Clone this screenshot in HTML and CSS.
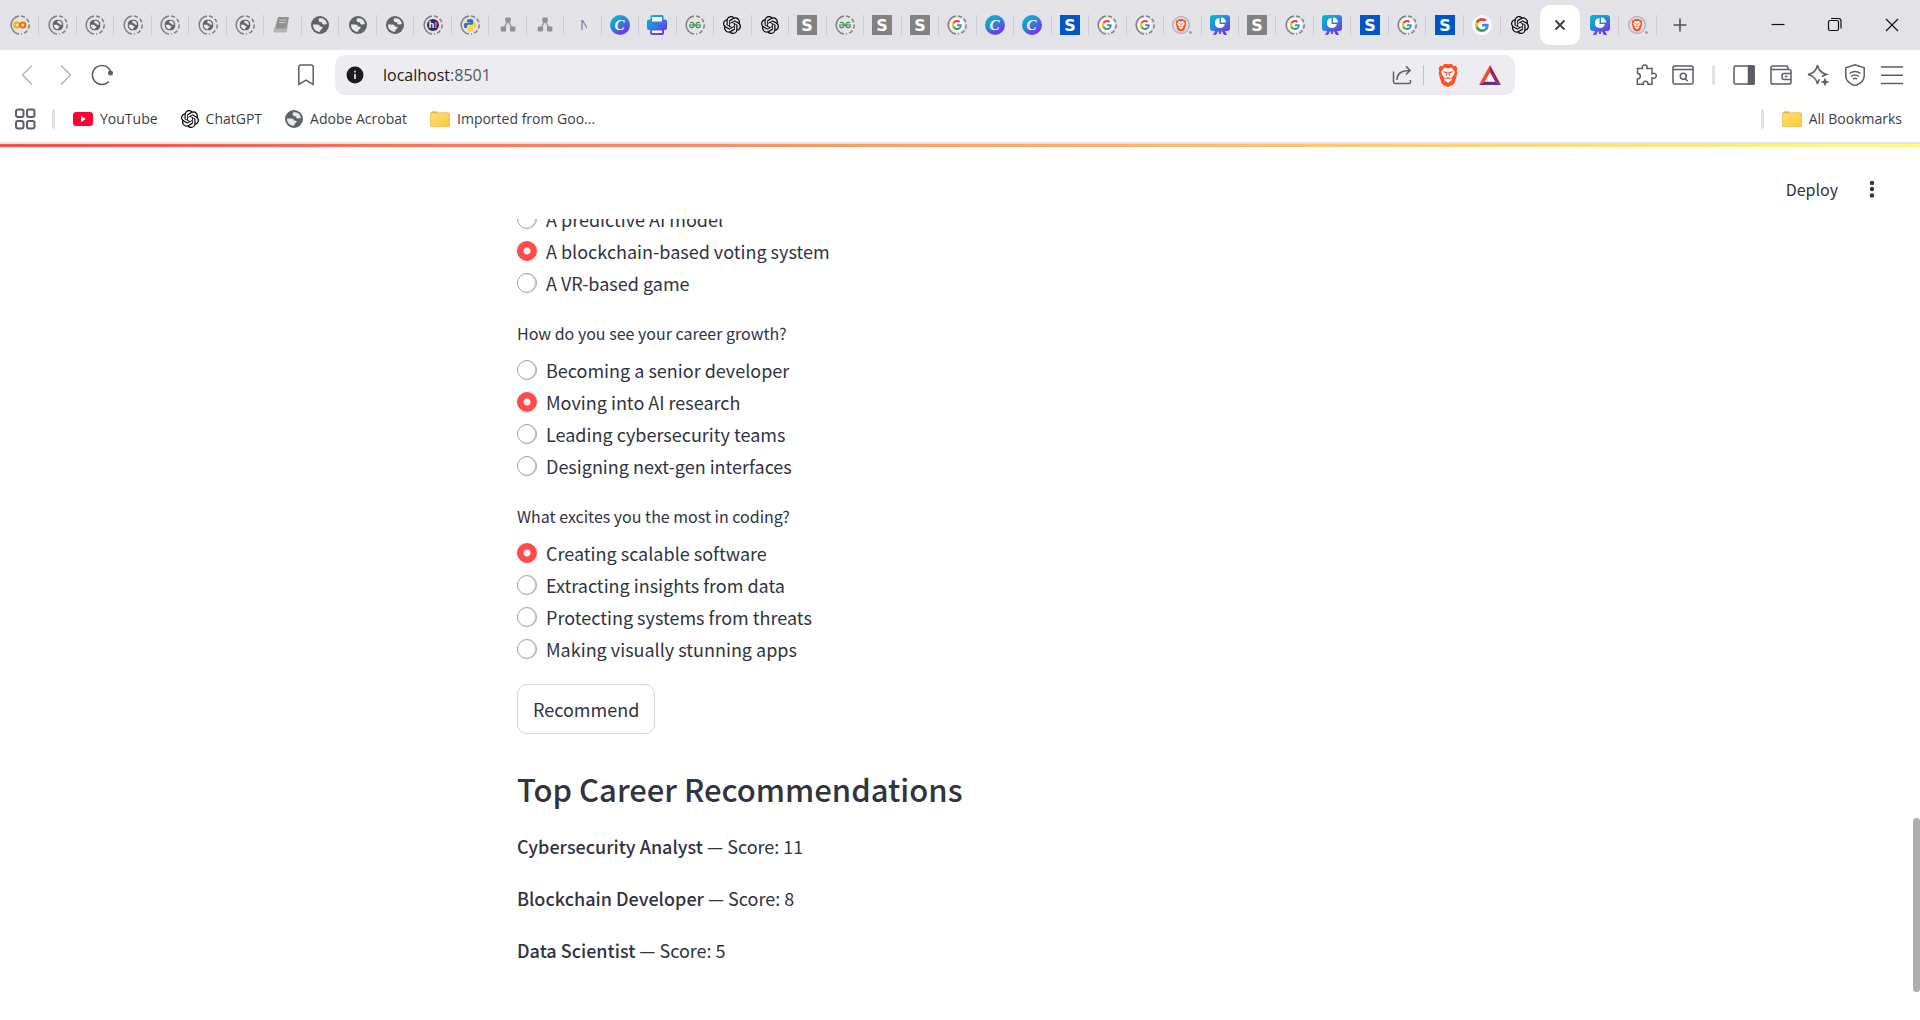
FILE: index.html
```html
<!DOCTYPE html>
<html lang="en">
<head>
<meta charset="utf-8">
<title>localhost:8501</title>
<link rel="stylesheet" href="styles.css">
</head>
<body>
<svg class="gradients" aria-hidden="true">
  <defs>
    <linearGradient id="canva" x1="0" y1="0" x2="0.7" y2="1"><stop offset="0" stop-color="#00c4cc"/><stop offset="0.5" stop-color="#2a86dd"/><stop offset="1" stop-color="#7d2ae8"/></linearGradient>
    <linearGradient id="gold" x1="0" y1="0" x2="1" y2="1"><stop offset="0" stop-color="#ffe07a"/><stop offset="1" stop-color="#fcc838"/></linearGradient>
  </defs>
</svg>
<svg class="sprite" aria-hidden="true">
  <symbol id="ring" viewBox="0 0 20 20"><g fill="none" stroke="#808184" stroke-width="1.5"><path d="M9 .9A9.2 9.2 0 0 0 9 19.1"/><path d="M11 .9a9.2 9.2 0 0 1 8.200 9.100a9.200 9.200 0 0 1-8.200 9.100" stroke-dasharray="4.200 2.200"/></g></symbol>
  <symbol id="globe" viewBox="0 0 18 18"><circle cx="9" cy="9" r="9" fill="#5f6368"/><path d="M2 8.500h4.200c1.900 0 2.600.8 2.700 2.100l2 .2c.8.100.9 1.100.3 1.700l-1.500 1.300c-.3.600-.3 1.400-.9 2C5 15.800 1.800 12.800 2 8.500z" fill="#e9e9ed"/><path d="M8.500 2.300c1.800-.4 3.600 0 5 1.200 1.300 1.100 2.200 2.600 2.400 4.500-1.300.5-3 .5-4 .2-.8-.3-1-1.300-.5-2H9.200c-1.500-.2-2.200-3.300-.7-3.900z" fill="#e9e9ed"/></symbol>
  <symbol id="page" viewBox="0 0 20 20"><use href="#ring" width="20" height="20"/><use href="#globe" x="4.500" y="4.500" width="11" height="11"/></symbol>
  <symbol id="colab" viewBox="0 0 20 20"><use href="#ring" width="20" height="20"/><g fill="none" stroke-width="2"><circle cx="7" cy="10" r="2.600" stroke="#f9ab00"/><circle cx="12.800" cy="10" r="2.600" stroke="#e8710a"/></g></symbol>
  <symbol id="book" viewBox="0 0 20 20"><path d="M5 2h11l-2.500 13H2c-1.500 0-1-2 .2-2.200z" fill="#909090"/><path d="M2 13.500h11.300L15.500 5 14 16.500l-.8 1H2c-2 0-2-3.500 0-4z" fill="#b3b3b3"/><path d="M6.500 5h7M6 7.500h6.500" stroke="#c8c8c8"/></symbol>
  <symbol id="hbang" viewBox="0 0 20 20"><use href="#ring" width="20" height="20"/><circle cx="10" cy="10" r="6" fill="#302b5b"/><text x="10" y="13.200" text-anchor="middle" font-family="Liberation Sans" font-weight="700" font-size="9" fill="#fff">h<tspan fill="#f48fd0">!</tspan></text></symbol>
  <symbol id="python" viewBox="0 0 20 20"><use href="#ring" width="20" height="20"/><path d="M10 4c-2.500 0-3 .8-3 2v1.500h3.300V8H5.500C4 8 3.800 9.500 3.800 10.500S4.300 13 5.500 13H7v-1.700c0-1 .8-1.600 1.800-1.600h3c1 0 1.500-.6 1.500-1.500V6c0-1.300-1-2-3.300-2z" fill="#3775a9"/><path d="M10.200 16.500c2.500 0 3-.8 3-2V13H10v-.5h4.800c1.500 0 1.700-1.500 1.700-2.500S16 7.500 14.800 7.500h-.9v1.700c0 1-.8 1.600-1.800 1.600h-3c-1 0-1.500.6-1.500 1.500v2.200c0 1.300 1 2 2.600 2z" fill="#ffd43b"/></symbol>
  <symbol id="nodes" viewBox="0 0 20 20"><path d="M10 5.500L5.500 14M10 5.500l4.500 8.500" stroke="#999" stroke-width="1.500"/><g fill="#909090"><rect x="7.300" y="2.500" width="5.400" height="5" rx="1"/><rect x="2.700" y="11.500" width="5.400" height="5" rx="1"/><rect x="12" y="11.500" width="5.400" height="5" rx="1"/></g></symbol>
  <symbol id="letter-n" viewBox="0 0 20 20"><text x="7" y="15" font-family="Open Sans" font-size="14" fill="#777">N</text><path d="M14 0h6v20h-6z" fill="#e3e2e7"/></symbol>
  <symbol id="canva-c" viewBox="0 0 20 20"><circle cx="10" cy="10" r="10" fill="url(#canva)"/><text x="9.500" y="15" text-anchor="middle" font-family="Liberation Serif" font-style="italic" font-weight="700" font-size="15" fill="#fff">C</text></symbol>
  <symbol id="printer" viewBox="0 0 20 20"><path d="M5 0h10q1.500 0 1.500 1.500V4.500H18q2 0 2 2V13q0 2-2 2h-1v3q0 2-2 2H5q-2 0-2-2v-3H2q-2 0-2-2V6.500q0-2 2-2h1.500v-3Q3.500 0 5 0z" fill="url(#canva)"/><path d="M5 2h10v4.500H5zM5 15.500h10V18H5z" fill="#fff"/></symbol>
  <symbol id="gfg" viewBox="0 0 20 20"><use href="#ring" width="20" height="20"/><path d="M4 10h12M5 7.700q4-1.200 4 2.300a2 2 0 0 1-4.400.8M15 7.700q-4-1.200-4 2.300a2 2 0 0 0 4.400.8" fill="none" stroke="#2f8d46" stroke-width="1.100"/></symbol>
  <symbol id="gpt" viewBox="0 0 24 24"><path d="M22.2819 9.8211a5.9847 5.9847 0 0 0-.5157-4.9108 6.0462 6.0462 0 0 0-6.5098-2.9A6.0651 6.0651 0 0 0 4.9807 4.1818a5.9847 5.9847 0 0 0-3.9977 2.9 6.0462 6.0462 0 0 0 .7427 7.0966 5.98 5.98 0 0 0 .511 4.9107 6.051 6.051 0 0 0 6.5146 2.9001A5.9847 5.9847 0 0 0 13.2599 24a6.0557 6.0557 0 0 0 5.7718-4.2058 5.9894 5.9894 0 0 0 3.9977-2.9001 6.0557 6.0557 0 0 0-.7475-7.0729zm-9.022 12.6081a4.4755 4.4755 0 0 1-2.8764-1.0408l.1419-.0804 4.7783-2.7582a.7948.7948 0 0 0 .3927-.6813v-6.7369l2.02 1.1686a.071.071 0 0 1 .038.052v5.5826a4.504 4.504 0 0 1-4.4945 4.4944zm-9.6607-4.1254a4.4708 4.4708 0 0 1-.5346-3.0137l.142.0852 4.783 2.7582a.7712.7712 0 0 0 .7806 0l5.8428-3.3685v2.3324a.0804.0804 0 0 1-.0332.0615L9.74 19.9502a4.4992 4.4992 0 0 1-6.1408-1.6464zM2.3408 7.8956a4.485 4.485 0 0 1 2.3655-1.9728V11.6a.7664.7664 0 0 0 .3879.6765l5.8144 3.3543-2.0201 1.1685a.0757.0757 0 0 1-.071 0l-4.8303-2.7865A4.504 4.504 0 0 1 2.3408 7.872zm16.5963 3.8558L13.1038 8.364 15.1192 7.2a.0757.0757 0 0 1 .071 0l4.8303 2.7913a4.4944 4.4944 0 0 1-.6765 8.1042v-5.6772a.79.79 0 0 0-.407-.667zm2.0107-3.0231l-.142-.0852-4.7735-2.7818a.7759.7759 0 0 0-.7854 0L9.409 9.2297V6.8974a.0662.0662 0 0 1 .0284-.0615l4.8303-2.7866a4.4992 4.4992 0 0 1 6.6802 4.66zM8.3065 12.863l-2.02-1.1638a.0804.0804 0 0 1-.038-.0567V6.0742a4.4992 4.4992 0 0 1 7.3757-3.4537l-.142.0805L8.704 5.459a.7948.7948 0 0 0-.3927.6813zm1.0976-2.3654l2.602-1.4998 2.6069 1.4998v2.9994l-2.5974 1.4997-2.6067-1.4997Z" fill="#000"/></symbol>
  <symbol id="s-grey" viewBox="0 0 20 20"><path d="M0 0h20v20H0z" fill="#828282"/><text x="10" y="16" text-anchor="middle" font-family="DejaVu Sans" font-weight="700" font-size="16" fill="#fff">S</text></symbol>
  <symbol id="s-blue" viewBox="0 0 20 20"><path d="M0 0h20v20H0z" fill="#0056c7"/><text x="10" y="16" text-anchor="middle" font-family="DejaVu Sans" font-weight="700" font-size="16" fill="#fff">S</text></symbol>
  <symbol id="g" viewBox="0 0 48 48"><path fill="#EA4335" d="M24 9.500c3.540 0 6.710 1.220 9.210 3.600l6.850-6.850C35.900 2.380 30.470 0 24 0 14.620 0 6.510 5.380 2.560 13.220l7.980 6.190C12.430 13.720 17.740 9.500 24 9.500z"/><path fill="#4285F4" d="M46.980 24.550c0-1.570-.15-3.090-.38-4.550H24v9.020h12.940c-.58 2.960-2.260 5.480-4.780 7.180l7.730 6c4.510-4.180 7.090-10.360 7.090-17.650z"/><path fill="#FBBC05" d="M10.530 28.590c-.48-1.450-.76-2.990-.76-4.590s.27-3.140.76-4.590l-7.980-6.190C.92 16.460 0 20.120 0 24c0 3.880.92 7.540 2.560 10.780l7.970-6.190z"/><path fill="#34A853" d="M24 48c6.480 0 11.930-2.130 15.890-5.810l-7.730-6c-2.150 1.450-4.920 2.300-8.160 2.300-6.260 0-11.570-4.220-13.470-9.910l-7.980 6.190C6.510 42.620 14.620 48 24 48z"/></symbol>
  <symbol id="google-ring" viewBox="0 0 20 20"><use href="#ring" width="20" height="20"/><circle cx="10" cy="10" r="7" fill="#fff"/><use href="#g" x="5" y="5" width="10" height="10"/></symbol>
  <symbol id="google" viewBox="0 0 20 20"><circle cx="10" cy="10" r="10" fill="#fff"/><use href="#g" x="3" y="3" width="14" height="14"/></symbol>
  <symbol id="lion" viewBox="0 0 20 24"><path d="M6 0h8l2 2.300 2-.4 2 2.800-1 2.800 1 1.500-3 10.500q-.5 1.500-2 2.500l-5 2-5-2q-1.500-1-2-2.500L0 9l1-1.500L0 4.700l2-2.800 2 .4z" fill="#fb542b"/><path d="M6 4l4 .8L14 4l3 4-.6 3-3.200 3.500 1.300 2L10 19.500l-4.500-3 1.300-2L3.600 11 3 8z" fill="#fff"/><path d="M5 8l4 1.400-.8 3.300M15 8l-4 1.400.8 3.300M7.500 15.500L10 14l2.500 1.500" fill="none" stroke="#fb542b" stroke-width="1.300"/></symbol>
  <symbol id="brave-ring" viewBox="0 0 20 20"><circle cx="9" cy="10" r="8.300" fill="#dedee3" stroke="#aaadb5" stroke-width="1.300"/><use href="#lion" x="3.500" y="4" width="11" height="12.500"/><circle cx="18.500" cy="17.500" r="1.500" fill="#a0a0a5"/></symbol>
  <symbol id="deck" viewBox="0 0 20 20"><path d="M3 0h14q3 0 3 3v10q0 3-3 3h-2l2 4h-3l-2-3.500h-1V19H9v-2.500H8L6 20H3l2-4H3q-3 0-3-3V3Q0 0 3 0z" fill="url(#canva)"/><path d="M9.500 3A5 5 0 1 0 14.800 9H9.500z" fill="#fff"/><path d="M11 2.500a5 5 0 0 1 5 5h-5z" fill="#fff"/></symbol>
  <symbol id="folder" viewBox="0 0 20 16"><path d="M1 2Q1 .5 2.500.5h4L8 2.500H6L1 4z" fill="#d99b14"/><rect x=".5" y="1.800" width="19" height="14" rx="1.200" fill="url(#gold)" stroke="#e0b040" stroke-width=".7"/></symbol>
</svg>

<header class="browser">
  <div class="tabstrip">
    <div class="tabs" role="tablist" aria-label="Open tabs">
      <button class="tab" role="tab" aria-label="Colab"><svg><use href="#colab"/></svg></button>
      <button class="tab" role="tab" aria-label="Page"><svg><use href="#page"/></svg></button>
      <button class="tab" role="tab" aria-label="Page"><svg><use href="#page"/></svg></button>
      <button class="tab" role="tab" aria-label="Page"><svg><use href="#page"/></svg></button>
      <button class="tab" role="tab" aria-label="Page"><svg><use href="#page"/></svg></button>
      <button class="tab" role="tab" aria-label="Page"><svg><use href="#page"/></svg></button>
      <button class="tab" role="tab" aria-label="Page"><svg><use href="#page"/></svg></button>
      <button class="tab" role="tab" aria-label="Book"><svg><use href="#book"/></svg></button>
      <button class="tab small" role="tab" aria-label="Page"><svg><use href="#globe"/></svg></button>
      <button class="tab small" role="tab" aria-label="Page"><svg><use href="#globe"/></svg></button>
      <button class="tab small" role="tab" aria-label="Page"><svg><use href="#globe"/></svg></button>
      <button class="tab" role="tab" aria-label="Page"><svg><use href="#hbang"/></svg></button>
      <button class="tab" role="tab" aria-label="Python"><svg><use href="#python"/></svg></button>
      <button class="tab" role="tab" aria-label="Diagram"><svg><use href="#nodes"/></svg></button>
      <button class="tab" role="tab" aria-label="Diagram"><svg><use href="#nodes"/></svg></button>
      <button class="tab" role="tab" aria-label="Page"><svg><use href="#letter-n"/></svg></button>
      <button class="tab" role="tab" aria-label="Canva"><svg><use href="#canva-c"/></svg></button>
      <button class="tab" role="tab" aria-label="Print"><svg><use href="#printer"/></svg></button>
      <button class="tab" role="tab" aria-label="GeeksforGeeks"><svg><use href="#gfg"/></svg></button>
      <button class="tab small" role="tab" aria-label="ChatGPT"><svg><use href="#gpt"/></svg></button>
      <button class="tab small" role="tab" aria-label="ChatGPT"><svg><use href="#gpt"/></svg></button>
      <button class="tab" role="tab" aria-label="Page"><svg><use href="#s-grey"/></svg></button>
      <button class="tab" role="tab" aria-label="GeeksforGeeks"><svg><use href="#gfg"/></svg></button>
      <button class="tab" role="tab" aria-label="Page"><svg><use href="#s-grey"/></svg></button>
      <button class="tab" role="tab" aria-label="Page"><svg><use href="#s-grey"/></svg></button>
      <button class="tab" role="tab" aria-label="Google"><svg><use href="#google-ring"/></svg></button>
      <button class="tab" role="tab" aria-label="Canva"><svg><use href="#canva-c"/></svg></button>
      <button class="tab" role="tab" aria-label="Canva"><svg><use href="#canva-c"/></svg></button>
      <button class="tab" role="tab" aria-label="Page"><svg><use href="#s-blue"/></svg></button>
      <button class="tab" role="tab" aria-label="Google"><svg><use href="#google-ring"/></svg></button>
      <button class="tab" role="tab" aria-label="Google"><svg><use href="#google-ring"/></svg></button>
      <button class="tab" role="tab" aria-label="Brave"><svg><use href="#brave-ring"/></svg></button>
      <button class="tab" role="tab" aria-label="Presentation"><svg><use href="#deck"/></svg></button>
      <button class="tab" role="tab" aria-label="Page"><svg><use href="#s-grey"/></svg></button>
      <button class="tab" role="tab" aria-label="Google"><svg><use href="#google-ring"/></svg></button>
      <button class="tab" role="tab" aria-label="Presentation"><svg><use href="#deck"/></svg></button>
      <button class="tab" role="tab" aria-label="Page"><svg><use href="#s-blue"/></svg></button>
      <button class="tab" role="tab" aria-label="Google"><svg><use href="#google-ring"/></svg></button>
      <button class="tab" role="tab" aria-label="Page"><svg><use href="#s-blue"/></svg></button>
      <button class="tab" role="tab" aria-label="Google"><svg><use href="#google"/></svg></button>
      <button class="tab small last" role="tab" aria-label="ChatGPT"><svg><use href="#gpt"/></svg></button>
      <button class="tab active" role="tab" aria-selected="true" aria-label="Close tab"><svg viewBox="0 0 20 20"><path d="M5.500 5.500l9 9m0-9l-9 9" stroke="#3c3d42" stroke-width="1.800"/></svg></button>
      <button class="tab" role="tab" aria-label="Presentation"><svg><use href="#deck"/></svg></button>
      <button class="tab" role="tab" aria-label="Brave"><svg><use href="#brave-ring"/></svg></button>
    </div>
    <div class="window-controls">
      <button class="new-tab" aria-label="New tab"><svg viewBox="0 0 20 20"><path d="M10 3.500v13M3.500 10h13" stroke="#505258" stroke-width="1.600"/></svg></button>
      <button aria-label="Minimize"><svg viewBox="0 0 20 20"><path d="M3.500 9.500h13" stroke="#111" stroke-width="1.200"/></svg></button>
      <button aria-label="Restore"><svg viewBox="0 0 20 20"><g fill="none" stroke="#111" stroke-width="1.200"><rect x="3.500" y="5.500" width="10" height="10" rx="1.500"/><path d="M6 3.500h7.500q2.500 0 2.500 2.500v7.500"/></g></svg></button>
      <button aria-label="Close window"><svg viewBox="0 0 20 20"><path d="M4 4l12 12m0-12L4 16" stroke="#111" stroke-width="1.200"/></svg></button>
    </div>
  </div>

  <div class="toolbar">
    <nav class="history">
      <button aria-label="Back"><svg class="s24 faint" viewBox="0 0 24 24"><path d="M16 2.500L6.500 12 16 21.500"/></svg></button>
      <button aria-label="Forward"><svg class="s24 faint" viewBox="0 0 24 24"><path d="M8 2.500l9.500 9.500L8 21.500"/></svg></button>
      <button aria-label="Reload"><svg class="s24" viewBox="0 0 24 24"><path d="M18.800 18.500A9.500 9.500 0 1 1 20.500 8"/><circle cx="20.500" cy="10" r="2.500" fill="#5b5e64" stroke="none"/></svg></button>
      <button class="save" aria-label="Bookmark this page"><svg class="s24" viewBox="0 0 24 24"><path d="M4.800 4q0-2 2-2h10.400q2 0 2 2v17.500L12 17.200l-7.200 4.300z"/></svg></button>
    </nav>
    <div class="address">
      <svg class="s18" viewBox="0 0 18 18"><circle cx="9" cy="9" r="8.500" fill="#1b1b20" stroke="none"/><path d="M9 8v5M9 4.800v1.700" stroke="#dcdce2" stroke-width="1.800"/></svg>
      <div class="url" role="textbox" aria-label="Address">localhost<span>:8501</span></div>
      <button aria-label="Share"><svg viewBox="0 0 20 20"><path d="M1.500 6.500v10.300q0 1.700 1.700 1.700h14q1.300 0 1.300-1.300V15M5 15Q5 5.500 17.500 5.500M14 1.300l4 4.200-4 4"/></svg></button>
      <i class="rule"></i>
      <button class="shield" aria-label="Brave Shields"><svg class="lion" viewBox="0 0 20 24"><use href="#lion"/></svg></button>
      <button aria-label="Rewards"><svg class="bat" viewBox="0 0 22 20"><path d="M11 0L0 20l6-3.500 5-9z" fill="#ff4724" stroke="none"/><path d="M11 0l11 20-6-3.500-5-9z" fill="#9e1f63" stroke="none"/><path d="M0 20h22l-6-3.500H6z" fill="#662d91" stroke="none"/><path d="M11 7.500l5 9H6z" fill="#fff" stroke="none"/></svg></button>
    </div>
    <div class="extensions">
      <button aria-label="Extensions"><svg class="s22" viewBox="0 0 22 22"><path d="M2.500 4.500h5C6.800 2.500 8 1 9.700 1s3 1.500 2.200 3.500H17v5.200c2.300-1 4.300 0 4.300 2s-2 3.100-4.300 2.200v6.300h-4c.3-2-1-3-2.500-3S8 18.300 8.300 20.200h-6V15c1.800 0 3-1 3-2.800S4 9.500 2.500 9.500z"/></svg></button>
      <button aria-label="Search tabs"><svg class="s22" viewBox="0 0 22 22"><rect x="1" y="2" width="20" height="18" rx="1.500"/><path d="M1 5.500h20M13.200 14.700l2.500 2.500"/><circle cx="11.300" cy="12.300" r="3"/></svg></button>
      <i class="rule soft"></i>
      <button aria-label="Sidebar"><svg class="s22" viewBox="0 0 22 22"><rect x="1" y="2" width="20" height="18" rx="1.500"/><path d="M15.500 2h5.500v18h-5.500z" fill="#5b5e64"/></svg></button>
      <button aria-label="Wallet"><svg class="s22" viewBox="0 0 22 22"><path d="M3 5.500h16q2 0 2 2v10.700q0 1.800-2 1.800H3q-2 0-2-1.800V4q0-2 2-2h13.500q1.500 0 1.500 1.500v2M3 5.500H1.500M21 9.500h-7q-2 0-2 2v2q0 2 2 2h7M15 12.500h2.500"/></svg></button>
      <button aria-label="Assistant"><svg class="s22" viewBox="0 0 22 22"><path d="M10.500 1c1 5.500 3.500 8 9 9.500-2 .6-3.500 1.200-4.700 2.200M10.500 1C9.500 6.500 6.500 9.500 1 10.500c5.500 1.500 8.500 4 9.500 9.500.4-2 1-3.500 2-4.800"/><path d="M18 13.500l1.300 3.200 3 1.300-3 1.300L18 22.500l-1.300-3.200-3-1.300 3-1.300z" fill="#5b5e64" stroke="none"/></svg></button>
      <button aria-label="VPN"><svg class="s22" viewBox="0 0 22 22"><path d="M11 .8l9.200 3V12c0 5-4.500 8-9.200 9.800C6.300 20 1.800 17 1.800 12V3.800zM5.500 9.500q5.500-4 11 0M7 12.300q4-2.800 8 0M9 15q2-1.300 4 0"/></svg></button>
      <button aria-label="Menu"><svg class="s22" viewBox="0 0 22 22"><path d="M0 3h22M0 11.200h22M0 19.500h22"/></svg></button>
    </div>
  </div>

  <nav class="bookmarks">
    <button aria-label="Apps"><svg class="s22" viewBox="0 0 22 22"><g stroke-width="2"><rect x="2" y="1.500" width="7.500" height="7.500" rx="2"/><rect x="13" y="1.500" width="7.500" height="7.500" rx="2"/><rect x="2" y="13" width="7.500" height="7.500" rx="2"/><rect x="13" y="13" width="7.500" height="7.500" rx="2"/></g></svg></button>
    <i class="rule soft first"></i>
    <a href="#youtube"><svg viewBox="0 0 20 20"><rect y="3" width="20" height="14" rx="3" fill="#f03" stroke="none"/><path d="M8 7l5 3-5 3z" fill="#fff" stroke="none"/></svg>YouTube</a>
    <a href="#chatgpt"><svg class="s18"><use href="#gpt"/></svg>ChatGPT</a>
    <a href="#acrobat"><svg class="s18"><use href="#globe"/></svg>Adobe Acrobat</a>
    <a href="#imported"><svg viewBox="0 0 20 16"><use href="#folder"/></svg>Imported from Goo...</a>
    <i class="rule soft end"></i>
    <a class="all" href="#all"><svg viewBox="0 0 20 16"><use href="#folder"/></svg>All Bookmarks</a>
  </nav>
</header>

<div class="app">
  <header class="app-bar">
    <button class="deploy">Deploy</button>
    <button class="more" aria-label="Main menu"><svg viewBox="0 0 20 20"><g fill="#31333f"><circle cx="10" cy="4" r="2.200"/><circle cx="10" cy="10" r="2.200"/><circle cx="10" cy="16.500" r="2.200"/></g></svg></button>
  </header>
  <main class="scroller">
    <form class="content">
      <div class="options" role="radiogroup" aria-label="Project">
        <label><input type="radio" name="project">A predictive AI model</label>
        <label><input type="radio" name="project" checked>A blockchain-based voting system</label>
        <label><input type="radio" name="project">A VR-based game</label>
      </div>
      <fieldset class="options">
        <legend>How do you see your career growth?</legend>
        <label><input type="radio" name="growth">Becoming a senior developer</label>
        <label><input type="radio" name="growth" checked>Moving into AI research</label>
        <label><input type="radio" name="growth">Leading cybersecurity teams</label>
        <label><input type="radio" name="growth">Designing next-gen interfaces</label>
      </fieldset>
      <fieldset class="options">
        <legend>What excites you the most in coding?</legend>
        <label><input type="radio" name="coding" checked>Creating scalable software</label>
        <label><input type="radio" name="coding">Extracting insights from data</label>
        <label><input type="radio" name="coding">Protecting systems from threats</label>
        <label><input type="radio" name="coding">Making visually stunning apps</label>
      </fieldset>
      <button type="button" class="recommend">Recommend</button>
      <h2>Top Career Recommendations</h2>
      <p><strong>Cybersecurity Analyst</strong> — Score: 11</p>
      <p><strong>Blockchain Developer</strong> — Score: 8</p>
      <p><strong>Data Scientist</strong> — Score: 5</p>
    </form>
    <div class="thumb"></div>
  </main>
</div>
</body>
</html>
```
FILE: styles.css
```css
* { box-sizing: border-box; }

body {
  margin: 0;
  height: 100vh;
  display: flex;
  flex-direction: column;
  background: #fff;
  color: #31333f;
  font-family: "Noto Sans CJK SC", sans-serif;
}

button {
  border: 0;
  padding: 0;
  background: none;
  color: inherit;
  font: inherit;
}

svg { display: block; width: 20px; height: 20px; flex: none; }
.gradients { position: absolute; width: 0; height: 0; }
.sprite { display: none; }
.s24 { width: 24px; height: 24px; }
.s22 { width: 22px; height: 22px; }
.s18 { width: 18px; height: 18px; }

/* Browser chrome */
.browser {
  flex: none;
  border-bottom: 2px solid #e1e1e6;
  font-family: "Open Sans", sans-serif;
}

.tabstrip { display: flex; height: 50px; background: #e3e2e7; }
.tabs { flex: 1; display: flex; align-items: center; padding-left: 2px; }
.tab {
  flex: 1 1 0;
  display: flex;
  align-items: center;
  justify-content: center;
  height: 20px;
  border-right: 1px solid #cbcbd0;
}
.tab.small svg { width: 18px; height: 18px; }
.tab.last { border-color: transparent; }
.tab.active {
  flex: 0 0 40px;
  height: 40px;
  margin: 0 2px 0 1px;
  border: 0;
  border-radius: 10px;
  background: #fff;
}

.window-controls { display: flex; width: 263px; }
.window-controls button { width: 57px; display: grid; place-items: center; }
.window-controls .new-tab { width: 46px; margin-right: 46px; }

.toolbar { display: flex; align-items: center; height: 50px; }
.toolbar svg, .bookmarks svg {
  fill: none;
  stroke: #5b5e64;
  stroke-width: 1.5;
}
.toolbar svg.faint { stroke: #b4b6ba; }

.history { display: flex; width: 335px; padding: 0 17px 0 16px; gap: 13px; }
.save { margin-left: auto; }

.address {
  flex: 1;
  display: flex;
  align-items: center;
  height: 40px;
  padding: 0 14px 0 11px;
  border-radius: 10px;
  background: #edecf1;
}
.url { flex: 1; margin-left: 19px; font-size: 16px; line-height: 24px; color: #1b1b20; }
.url span { color: #55565e; }
.rule { width: 1px; height: 20px; margin: 0 14px 0 11px; background: #c0c0c6; }
.rule.soft { width: 3px; border-radius: 2px; background: #e1e1e6; }
.toolbar .lion { width: 20px; height: 23px; }
.shield { margin-right: 21px; }
.toolbar .bat { width: 22px; height: 20px; }
.toolbar use, .bookmarks use { stroke: none; }

.extensions { display: flex; align-items: center; gap: 15px; width: 405px; justify-content: flex-end; padding-right: 17px; }
.extensions .rule { margin: 0 3px; }

.bookmarks {
  display: flex;
  align-items: center;
  height: 42px;
  padding: 0 18px 4px 14px;
  font-size: 14px;
  line-height: 20px;
}
.bookmarks .first { margin: 0 18px 0 16px; }
.bookmarks .end { margin: 0 18px 0 auto; }
.bookmarks a {
  display: flex;
  align-items: center;
  gap: 7px;
  margin-right: 23px;
  color: #3c3d42;
  text-decoration: none;
}
.bookmarks .all { margin-right: 0; }

/* Streamlit page */
.app {
  flex: 1;
  min-height: 0;
  display: flex;
  flex-direction: column;
}
.app::before {
  content: "";
  height: 3px;
  background: linear-gradient(90deg, #ff4b4b, #fffd80);
}
.app-bar {
  flex: none;
  display: flex;
  align-items: center;
  justify-content: flex-end;
  gap: 24px;
  height: 72px;
  padding: 12px 38px 0 0;
  font-size: 16px;
  line-height: 24px;
}

.scroller {
  position: relative;
  flex: 1;
  min-height: 0;
  display: flex;
  flex-direction: column;
  justify-content: flex-end;
  overflow: hidden;
  padding: 0 26px 54px 20px;
}
.content {
  width: 100%;
  max-width: 880px;
  margin: 0 auto;
  font-size: 18px;
  line-height: 32px;
}

.options { display: flex; flex-direction: column; margin: 0 0 19px; padding: 0; border: 0; }
.options label { display: flex; align-items: center; gap: 9px; height: 32px; }
legend { padding: 0; margin-bottom: 6px; font-size: 16px; line-height: 30px; }

input[type="radio"] {
  appearance: none;
  width: 20px;
  height: 20px;
  margin: 0;
  border: 1px solid #a3a4aa;
  border-radius: 50%;
  box-shadow: inset -1px 0 0 #c4c5ca;
  background: #fff;
}
input[type="radio"]:checked {
  border-color: #ff4b4b;
  box-shadow: none;
  background: #ff4b4b radial-gradient(circle, #f0f2f6 3px, #ff4b4b 4px);
}

.recommend {
  height: 50px;
  padding: 0 15px;
  border: 1px solid #d6d6d9;
  border-radius: 10px;
}
h2 { margin: 34px 0 20px; font-size: 31px; line-height: 42px; font-weight: 500; }
p { margin: 0 0 20px; }
p:last-child { margin: 0; }
strong { font-weight: 500; }

.thumb {
  position: absolute;
  right: 0;
  bottom: 28px;
  width: 7px;
  height: 174px;
  border-radius: 4px;
  background: #adadb2;
}
```
